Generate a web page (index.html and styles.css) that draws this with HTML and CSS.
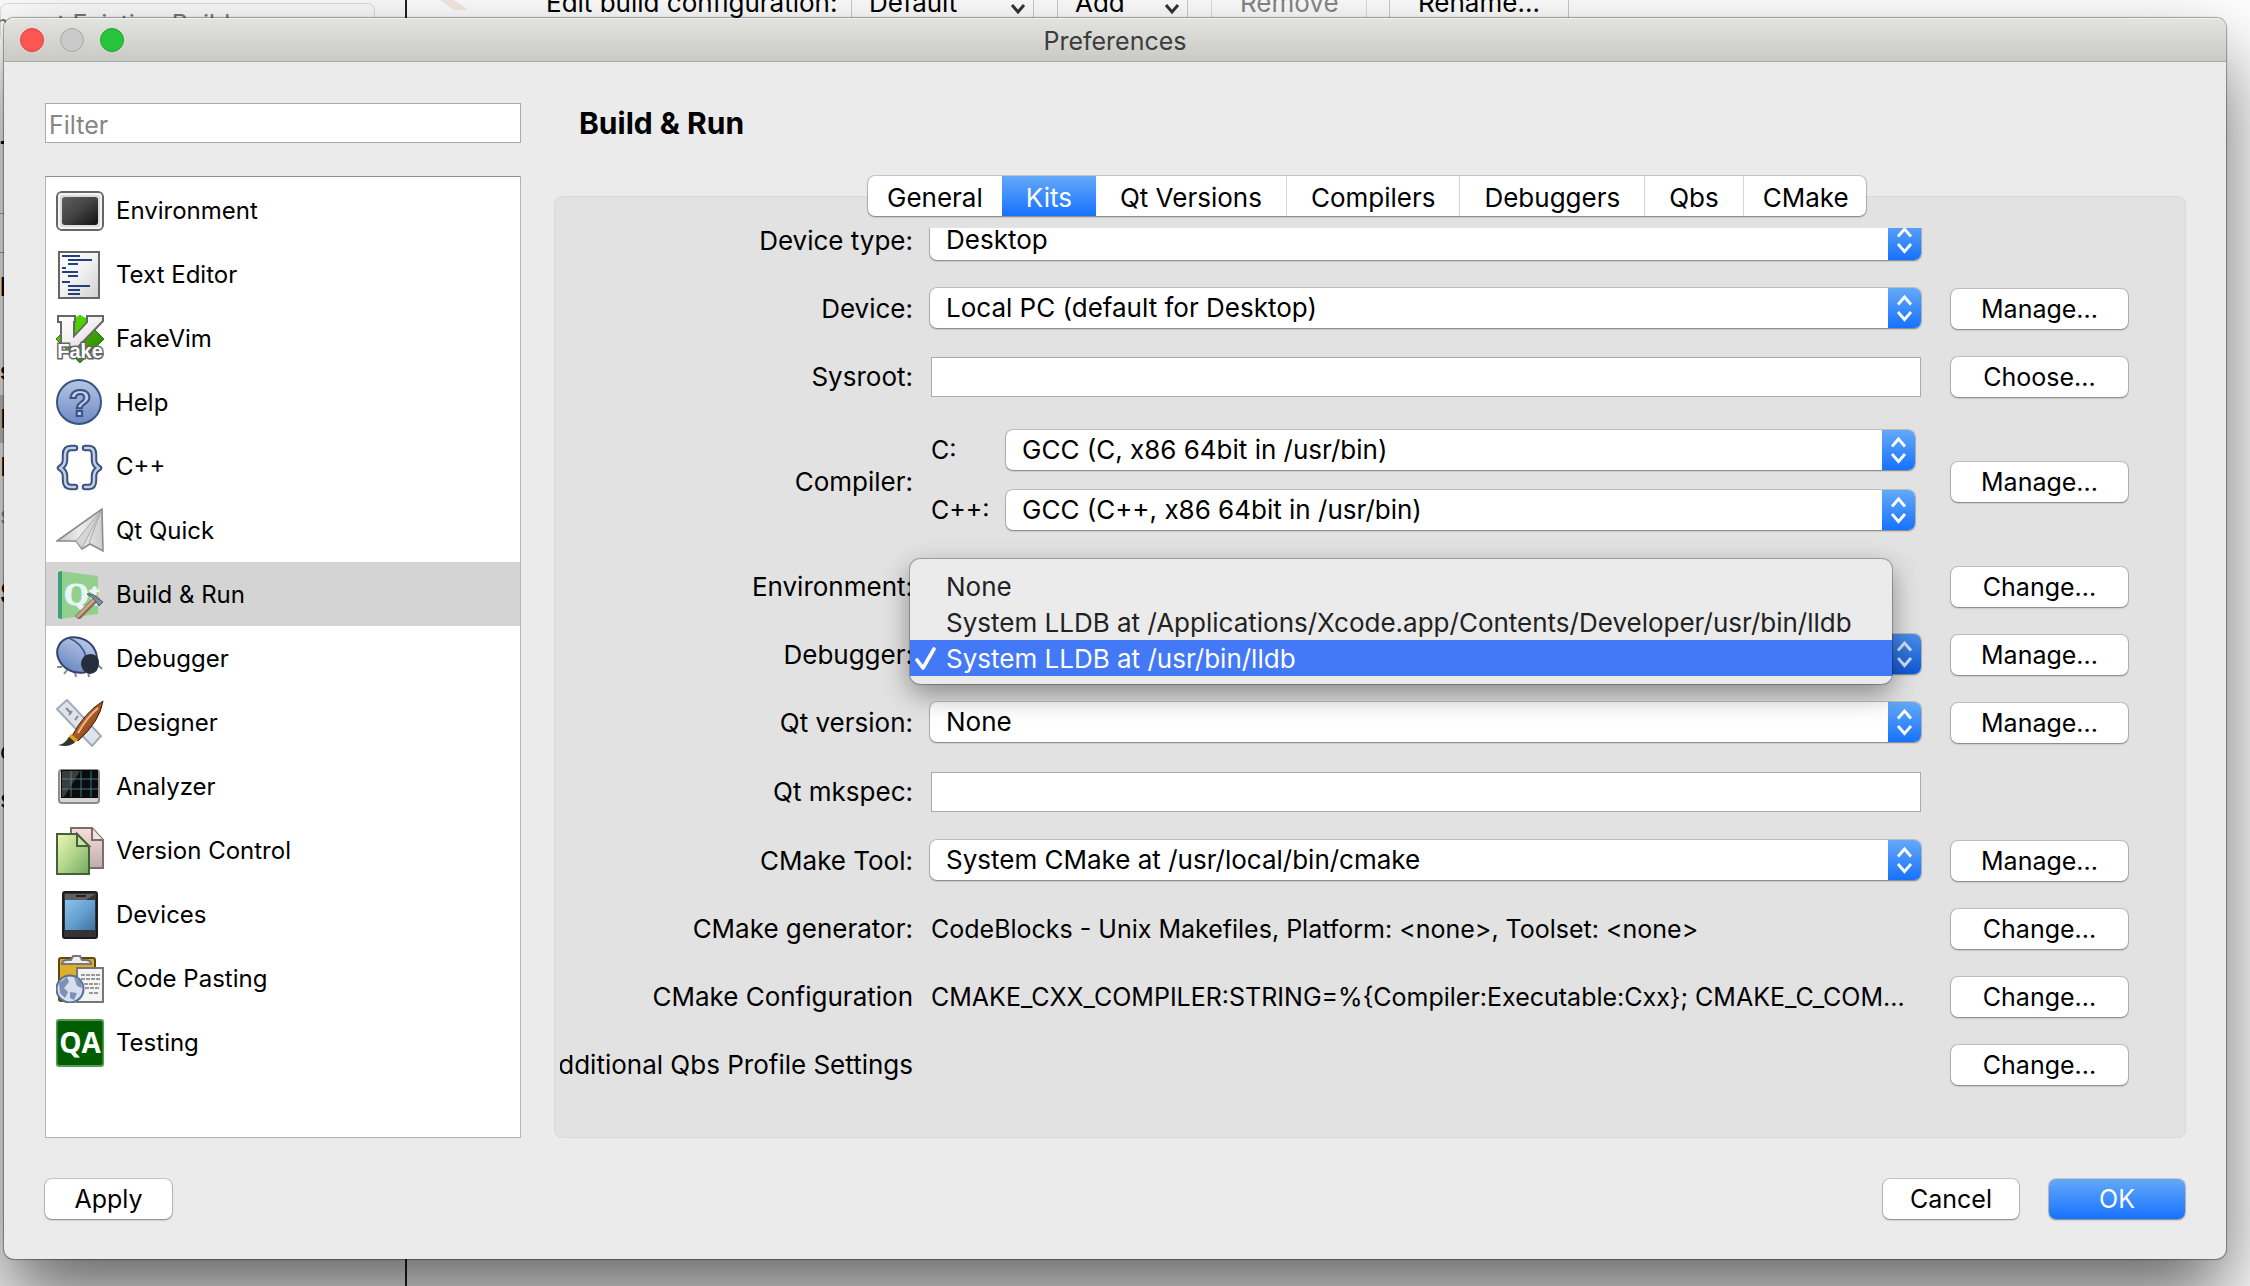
FILE: index.html
```html
<!DOCTYPE html>
<html lang="en">
<head>
<meta charset="utf-8">
<title>Preferences</title>
<link rel="stylesheet" href="styles.css">
</head>
<body>
<svg class="defs" aria-hidden="true">
  <defs>
    <linearGradient id="g-grey" x1="0" y1="0" x2="1" y2="1"><stop offset="0" stop-color="#fff"/><stop offset=".5" stop-color="#f1f1f1"/><stop offset="1" stop-color="#cfcfcf"/></linearGradient>
    <linearGradient id="g-dark" x1="0" y1="0" x2="1" y2="1"><stop offset="0" stop-color="#5e5e5e"/><stop offset=".45" stop-color="#454545"/><stop offset="1" stop-color="#111"/></linearGradient>
    <linearGradient id="g-blue" x1="0" y1="0" x2="0" y2="1"><stop offset="0" stop-color="#b6c6e6"/><stop offset="1" stop-color="#6d89c4"/></linearGradient>
    <linearGradient id="g-green" x1="0" y1="0" x2="1" y2="1"><stop offset="0" stop-color="#62e000"/><stop offset="1" stop-color="#1f7a00"/></linearGradient>
    <linearGradient id="g-leaf" x1="0" y1="0" x2="1" y2="1"><stop offset="0" stop-color="#eef6b5"/><stop offset=".5" stop-color="#b2d68c"/><stop offset="1" stop-color="#71a95f"/></linearGradient>
    <linearGradient id="g-pink" x1="0" y1="0" x2="0" y2="1"><stop offset="0" stop-color="#f9dddd"/><stop offset="1" stop-color="#bfaeae"/></linearGradient>
    <linearGradient id="g-screen" x1="0" y1="0" x2="1" y2="1"><stop offset="0" stop-color="#8cc3ee"/><stop offset=".5" stop-color="#66a0d0"/><stop offset="1" stop-color="#3f72a3"/></linearGradient>
    <linearGradient id="g-plane" x1="0" y1="0" x2="1" y2="0"><stop offset="0" stop-color="#c4c4c4"/><stop offset=".5" stop-color="#ececec"/><stop offset="1" stop-color="#cdcdcd"/></linearGradient>
    <linearGradient id="g-brush" x1="0" y1="0" x2="1" y2="1"><stop offset="0" stop-color="#e08a4a"/><stop offset="1" stop-color="#6b2c05"/></linearGradient>
    <symbol id="updown" viewBox="0 0 33 40"><path d="M10 16.500 16.500 9 23 16.500M10 24 16.500 31.500 23 24" fill="none" stroke="currentColor" stroke-width="2.800"/></symbol>
  </defs>
</svg>

<div class="backdrop" aria-hidden="true">
  <div class="back-side">
    <span class="back-tab">Import Existing Build...</span>
    <div class="back-list">
      <b>T</b><i></i><i></i><b class="is-heading">R</b><b>s</b><span class="is-current">E</span><span>P</span><span class="is-dim">s</span><b class="is-large">S</b><span class="is-late">c</span><span>s</span>
    </div>
  </div>
  <div class="back-main">
    <svg class="back-mark" viewBox="0 0 28 10"><path d="M0 0h14l14 10H14z" fill="#f6ebe3"/></svg>
    <span class="back-label">Edit build configuration:</span>
    <span class="back-box back-default">Default<svg viewBox="0 0 18 12"><path d="M3 2l6 7 6-7"/></svg></span>
    <span class="back-box back-add">Add<svg viewBox="0 0 18 12"><path d="M3 2l6 7 6-7"/></svg></span>
    <span class="back-box back-remove">Remove</span>
    <span class="back-box back-rename">Rename...</span>
  </div>
</div>

<main class="dialog">
  <header class="titlebar">
    <div class="lights">
      <button class="light light-close" aria-label="Close"></button>
      <button class="light light-min" aria-label="Minimize" disabled></button>
      <button class="light light-zoom" aria-label="Zoom"></button>
    </div>
    <span class="title">Preferences</span>
  </header>

  <div class="content">
    <div class="sidebar">
      <input class="text-field" type="text" placeholder="Filter" aria-label="Filter">
      <ul class="categories">
        <li><button class="category">
          <svg viewBox="0 0 48 48"><rect x="1" y="5" width="46" height="38" rx="5" fill="#dcdcdc" stroke="#666" stroke-width="2"/><rect x="3" y="7" width="42" height="34" rx="3" fill="none" stroke="#f3f3f3" stroke-width="2"/><rect x="6" y="10" width="36" height="28" rx="3" fill="url(#g-dark)"/></svg>
          Environment</button></li>
        <li><button class="category">
          <svg viewBox="0 0 48 48"><rect x="3" y="1" width="40" height="46" fill="url(#g-grey)" stroke="#666" stroke-width="2"/><path d="M6 5h18M12 9h24M12 13h10M6 17h4M6 21h16M12 25h10M6 31h8M12 35h22M12 39h12M12 43h12" stroke="#24407f" stroke-width="2"/></svg>
          Text Editor</button></li>
        <li><button class="category">
          <svg viewBox="0 0 48 48"><path d="M24 0 48 24 24 48 0 24z" fill="url(#g-green)" stroke="#2c7a10"/><path d="M2 1h17v6h-1v14L31 7V1h16v5L22 32h-8L5 30V7H2z" fill="url(#g-grey)" stroke="#666" stroke-width="2"/><path d="M20 2l4-2 6 3v4L19 19z" fill="#4fd000"/><text class="fake" x="24" y="43" text-anchor="middle">Fake</text></svg>
          FakeVim</button></li>
        <li><button class="category">
          <svg viewBox="0 0 48 48"><circle cx="23" cy="23" r="22" fill="url(#g-blue)" stroke="#3a5183" stroke-width="2"/><text class="mark" x="24" y="37" text-anchor="middle">?</text></svg>
          Help</button></li>
        <li><button class="category">
          <svg viewBox="0 0 48 48" fill="none" stroke-linecap="round" stroke-linejoin="round"><g stroke="#3a5280" stroke-width="6.500"><path d="M19 5h-4Q9 5 9 12v5Q9 22 4 25q5 3 5 8v4q0 7 6 7h4"/><path d="M29 5h4q5 0 5 7v5q0 5 5 8-5 3-5 8v4q0 7-5 7h-4"/></g><g stroke="#c3cfe2" stroke-width="2.500"><path d="M19 5h-4Q9 5 9 12v5Q9 22 4 25q5 3 5 8v4q0 7 6 7h4"/><path d="M29 5h4q5 0 5 7v5q0 5 5 8-5 3-5 8v4q0 7-5 7h-4"/></g></svg>
          C++</button></li>
        <li><button class="category">
          <svg viewBox="0 0 48 48"><path d="M1 34 46 2l1 42-13-7-8 5-6-8z" fill="url(#g-plane)" stroke="#8c8c8c" stroke-width="1.600"/><path d="M45 4 20 34l6 7zM45 4 33 36" fill="#d6d6d6" stroke="#aaa"/></svg>
          Qt Quick</button></li>
        <li><button class="category is-selected" aria-current="true">
          <svg viewBox="0 0 48 48"><path d="M3 0 42 5v38L3 48z" fill="#93d08e"/><path d="M2 1 6 0v48l-4-1z" fill="#3d9f79"/><text class="qt" x="8" y="34">Qt</text><path d="M21 47 42 26" stroke="#8a6a58" stroke-width="6"/><path d="M21 46 41 26" stroke="#d0a58b" stroke-width="3"/><path d="M31 23q6-1 9 3l7 5-4 4-6-8z" fill="#7d8d9c" stroke="#4e5c68"/></svg>
          Build &amp; Run</button></li>
        <li><button class="category">
          <svg viewBox="0 0 48 48"><path d="M1 32l5 0M8 39l3-4M20 42l-1-5M46 34l-5-5M33 42l-1-6" stroke="#888" stroke-width="2"/><ellipse cx="21" cy="20" rx="20.500" ry="17" transform="rotate(28 21 20)" fill="url(#g-blue)" stroke="#2f436d" stroke-width="2"/><path d="M13 3Q27 9 30 22" fill="none" stroke="#41588c" stroke-width="1.600"/><path d="M25 30q0-10 9-11 8 0 9 8 0 11-9 12-7-1-9-9z" fill="#262e3d"/></svg>
          Debugger</button></li>
        <li><button class="category">
          <svg viewBox="0 0 48 48"><path d="M1 10 11 1l34 36-9 10z" fill="#dfe3ec" stroke="#a3abbd" stroke-width="2"/><path d="M10 9l5 5M16 12l-3 4M22 17l-3 4" stroke="#7e8698" stroke-width="2"/><path d="M47 2Q44 22 22 42l-6-5Q28 14 47 2z" fill="url(#g-brush)" stroke="#3d1a05"/><path d="M42 9Q31 18 22 34" fill="none" stroke="#f0b68a" stroke-width="2"/><path d="M15 35l7 6-5 4-6-5z" fill="#dba520"/><path d="M13 38l6 5Q13 49 2 46q7-1 11-8z" fill="#333"/></svg>
          Designer</button></li>
        <li><button class="category">
          <svg viewBox="0 0 48 48"><rect x="3" y="7" width="40" height="33" rx="3" fill="#d5d5d5" stroke="#8b8b8b" stroke-width="2"/><rect x="5" y="7" width="37" height="28" fill="#0c0c0c"/><path d="M6 8h18L8 34H6z" fill="#3c3c3c"/><path d="M15 8v26M25 8v26M35 8v26M6 16h36M6 26h36" stroke="#4e93a3" stroke-width="1" opacity=".8"/></svg>
          Analyzer</button></li>
        <li><button class="category">
          <svg viewBox="0 0 48 48"><path d="M15 1h21l11 12v28H15z" fill="url(#g-pink)" stroke="#7d6e6e" stroke-width="2"/><path d="M36 1v12h11" fill="#efe4e4" stroke="#7d6e6e" stroke-width="2"/><path d="M1 7h20l12 13v27H1z" fill="url(#g-leaf)" stroke="#466039" stroke-width="2"/><path d="M21 7v12h12z" fill="#c6e3a0" stroke="#466039" stroke-width="2"/></svg>
          Version Control</button></li>
        <li><button class="category">
          <svg viewBox="0 0 48 48"><rect x="7" y="1" width="34" height="46" rx="2" fill="#333" stroke="#1b1b1b" stroke-width="2"/><path d="M9 3h30L30 9H9z" fill="#5e5e5e"/><path d="M20 5h10" stroke="#111" stroke-width="1.500"/><rect x="9" y="9" width="30" height="30" fill="url(#g-screen)"/></svg>
          Devices</button></li>
        <li><button class="category">
          <svg viewBox="0 0 48 48"><rect x="3" y="3" width="36" height="43" rx="2" fill="#dcb127" stroke="#5c4a12" stroke-width="2"/><path d="M6 9q0-4 6-4h3l2-4h7l2 4h3q6 0 6 4z" fill="#eee" stroke="#777" stroke-width="2"/><rect x="21" y="13" width="26" height="34" fill="#f4f4f4" stroke="#777" stroke-width="2"/><path d="M25 20h19M25 24h19M28 29h16M29 33h14M33 38h10" stroke="#999" stroke-width="2" stroke-dasharray="4 1"/><circle cx="14" cy="34" r="13.500" fill="#d8dfec" stroke="#5a6d94" stroke-width="2"/><path d="M3 28l8-6 2 5-5 6 4 4-3 6-5-5zM18 22l7 5 1 6-5-2zM14 37l7 1-3 7-4-2z" fill="#7d91b8"/></svg>
          Code Pasting</button></li>
        <li><button class="category">
          <svg viewBox="0 0 48 48"><rect x="0" y="0" width="48" height="48" rx="3" fill="#5a9a58"/><rect x="1.500" y="2" width="45" height="44" rx="2" fill="#005e00"/><text class="qa" x="24" y="34" text-anchor="middle">QA</text></svg>
          Testing</button></li>
      </ul>
    </div>

    <section class="page">
      <h1 class="heading">Build &amp; Run</h1>
      <div class="tabbed">
        <div class="tabs" role="tablist">
          <button class="tab" role="tab">General</button>
          <button class="tab is-active" role="tab" aria-selected="true">Kits</button>
          <button class="tab" role="tab">Qt Versions</button>
          <button class="tab" role="tab">Compilers</button>
          <button class="tab" role="tab">Debuggers</button>
          <button class="tab" role="tab">Qbs</button>
          <button class="tab" role="tab">CMake</button>
        </div>
        <div class="panel">
          <form class="kit">
            <div class="row">
              <label for="device-type">Device type:</label>
              <div class="combo"><select id="device-type"><option>Desktop</option></select><svg class="arrows"><use href="#updown"/></svg></div>
            </div>
            <div class="row">
              <label for="device">Device:</label>
              <div class="combo"><select id="device"><option>Local PC (default for Desktop)</option></select><svg class="arrows"><use href="#updown"/></svg></div>
              <button type="button" class="button">Manage...</button>
            </div>
            <div class="row">
              <label for="sysroot">Sysroot:</label>
              <input class="text-field" type="text" id="sysroot">
              <button type="button" class="button">Choose...</button>
            </div>
            <div class="row row-compiler">
              <span class="label">Compiler:</span>
              <div class="compilers">
                <label for="cc">C:</label>
                <div class="combo"><select id="cc"><option>GCC (C, x86 64bit in /usr/bin)</option></select><svg class="arrows"><use href="#updown"/></svg></div>
                <label for="cxx">C++:</label>
                <div class="combo"><select id="cxx"><option>GCC (C++, x86 64bit in /usr/bin)</option></select><svg class="arrows"><use href="#updown"/></svg></div>
              </div>
              <button type="button" class="button">Manage...</button>
            </div>
            <div class="row">
              <span class="label">Environment:</span>
              <span></span>
              <button type="button" class="button">Change...</button>
            </div>
            <div class="row">
              <span class="label">Debugger:</span>
              <div class="combo is-open">
                <button type="button" class="combo-button" aria-label="Debugger" aria-haspopup="listbox" aria-expanded="true"></button>
                <svg class="arrows"><use href="#updown"/></svg>
                <ul class="menu" role="listbox" aria-label="Debugger">
                  <li role="option">None</li>
                  <li role="option">System LLDB at /Applications/Xcode.app/Contents/Developer/usr/bin/lldb</li>
                  <li role="option" aria-selected="true" class="is-checked"><svg viewBox="0 0 22 24"><path d="M2 13l6 8L19 2" fill="none" stroke="#fff" stroke-width="3.600" stroke-linecap="round" stroke-linejoin="round"/></svg>System LLDB at /usr/bin/lldb</li>
                </ul>
              </div>
              <button type="button" class="button">Manage...</button>
            </div>
            <div class="row">
              <label for="qt-version">Qt version:</label>
              <div class="combo"><select id="qt-version"><option>None</option></select><svg class="arrows"><use href="#updown"/></svg></div>
              <button type="button" class="button">Manage...</button>
            </div>
            <div class="row row-mkspec">
              <label for="mkspec">Qt mkspec:</label>
              <input class="text-field" type="text" id="mkspec">
            </div>
            <div class="row">
              <label for="cmake-tool">CMake Tool:</label>
              <div class="combo"><select id="cmake-tool"><option>System CMake at /usr/local/bin/cmake</option></select><svg class="arrows"><use href="#updown"/></svg></div>
              <button type="button" class="button">Manage...</button>
            </div>
            <div class="row">
              <span class="label">CMake generator:</span>
              <span class="value">CodeBlocks - Unix Makefiles, Platform: &lt;none&gt;, Toolset: &lt;none&gt;</span>
              <button type="button" class="button">Change...</button>
            </div>
            <div class="row">
              <span class="label">CMake Configuration</span>
              <span class="value">CMAKE_CXX_COMPILER:STRING=%{Compiler:Executable:Cxx}; CMAKE_C_COM...</span>
              <button type="button" class="button">Change...</button>
            </div>
            <div class="row">
              <span class="label">Additional Qbs Profile Settings</span>
              <span></span>
              <button type="button" class="button">Change...</button>
            </div>
          </form>
        </div>
      </div>
    </section>
  </div>

  <footer class="actions">
    <button class="button action-apply">Apply</button>
    <button class="button">Cancel</button>
    <button class="button is-primary">OK</button>
  </footer>
</main>
</body>
</html>
```

FILE: styles.css
```css
* { box-sizing: border-box; }

body {
  margin: 0;
  min-height: 100vh;
  position: relative;
  overflow: hidden;
  background: #fff;
  color: #000;
  font: 25px/32px Inter, "Liberation Sans", sans-serif;
}

button, input, select { font: inherit; color: inherit; margin: 0; }
ul { list-style: none; margin: 0; padding: 0; }
.defs { position: absolute; width: 0; height: 0; }

/* Window behind the dialog */
.backdrop {
  position: absolute;
  inset: 0;
  display: flex;
  overflow: hidden;
  white-space: nowrap;
}
.back-side { width: 407px; border-right: 2px solid #222; background: #fcfcfc; overflow: hidden; }
.back-tab {
  display: flex;
  justify-content: flex-end;
  width: 375px;
  height: 40px;
  margin-top: 3px;
  padding: 4px 122px 0 0;
  border: 1px solid #ddd;
  border-radius: 8px;
  color: #777;
}
.back-list { display: flex; flex-direction: column; width: 40px; padding-top: 84px; }
.back-list > * { line-height: 48px; }
.back-list i { height: 39px; border-bottom: 1px solid #aaa; }
.back-list .is-heading { margin: 10px 0 36px; }
.back-list .is-current { background: #ccc; }
.back-list .is-dim { color: #999; }
.back-list .is-large { margin-top: 30px; font-size: 30px; }
.back-list .is-late { margin-top: 110px; }
.back-main { display: flex; flex: 1; height: 20px; font-size: 26px; }
.back-mark { width: 28px; height: 10px; margin-left: 33px; }
.back-label { width: 305px; margin-left: 78px; margin-top: -13px; }
.back-box {
  display: flex;
  justify-content: space-between;
  height: 40px;
  margin-top: -18px;
  padding: 4px 6px 0 17px;
  border: 1px solid #ccc;
  border-radius: 5px;
}
.back-box svg { width: 18px; height: 12px; margin-top: 16px; fill: none; stroke: #333; stroke-width: 3; }
.back-default { width: 183px; }
.back-add { width: 131px; margin-left: 23px; }
.back-remove { width: 156px; margin-left: 23px; padding-left: 28px; color: #888; border-color: #ddd; }
.back-rename { width: 180px; margin-left: 22px; padding-left: 28px; }

/* Dialog */
.dialog {
  position: relative;
  margin: 18px 24px 28px 4px;
  border-radius: 10px;
  background: #ebebeb;
  box-shadow: 0 0 1px 1px rgba(0, 0, 0, .35), 0 40px 80px rgba(0, 0, 0, .6);
}
.titlebar {
  display: grid;
  grid-template-columns: 1fr auto 1fr;
  align-items: center;
  height: 44px;
  border-bottom: 1px solid #a9a9a7;
  border-radius: 10px 10px 0 0;
  background: linear-gradient(#e3e4df, #c9c9c6);
  box-shadow: inset 0 1px #f2f2f0;
}
.lights { display: flex; gap: 16px; padding-left: 16px; }
.light { width: 24px; height: 24px; padding: 0; border: 1px solid; border-radius: 50%; }
.light-close { background: #fc5650; border-color: #e0443e; }
.light-min { background: #c9c9c9; border-color: #a9a9a9; }
.light-zoom { background: #28c43c; border-color: #1ea42e; }
.title { padding-top: 2px; color: #3c3c3c; }

.content {
  display: grid;
  grid-template-columns: 476px minmax(0, 1fr);
  gap: 33px;
  padding: 41px 40px 0 41px;
}
.sidebar, .page { display: flex; flex-direction: column; gap: 33px; }

.text-field {
  width: 100%;
  height: 40px;
  padding: 3px 3px 0;
  border: 1px solid #aaa;
  border-radius: 0;
  background: #fff;
  outline: 0;
}
.text-field::placeholder { color: #868686; opacity: 1; }

.categories { flex: 1; padding-top: 1px; border: 1px solid #b4b4b4; border-top-color: #8e8e8e; background: #fff; }
.category {
  display: flex;
  align-items: center;
  gap: 12px;
  width: 100%;
  height: 64px;
  padding: 1px 10px 0;
  border: 0;
  background: none;
  font-size: 24px;
  text-align: left;
}
.category svg { width: 48px; height: 48px; flex: none; }
.category.is-selected { background: #d4d4d4; }
.fake { font: bold 20px "Liberation Sans", sans-serif; fill: #fff; stroke: #666; stroke-width: 3px; paint-order: stroke; }
.mark { font: bold 37px "Liberation Sans", sans-serif; fill: #c5d1e8; stroke: #3a5183; stroke-width: 2px; }
.qt { font: bold 32px "Liberation Serif", serif; fill: #e6f5f5; stroke: #e6f5f5; stroke-width: 1px; }
.qa { font: bold 28px "Open Sans", sans-serif; fill: #fff; }

.heading { margin: 0; padding-left: 25px; font-size: 30px; line-height: 40px; font-weight: 700; }
.tabbed { display: flex; flex-direction: column; align-items: center; }
.tabs {
  display: flex;
  width: 998px;
  height: 40px;
  margin: 0 6px -20px 0;
  z-index: 1;
  border-radius: 7px;
  background: #fff;
  box-shadow: 0 0 0 1px rgba(0, 0, 0, .15), 0 1px 2px rgba(0, 0, 0, .35);
}
.tab {
  flex: 1 1 auto;
  padding: 3px 24px 0;
  border: 0;
  border-right: 1px solid #d5d5d5;
  background: none;
  font-size: 26px;
  white-space: nowrap;
}
.tab:first-child, .tab:last-child { padding-left: 19px; padding-right: 19px; border-right: 0; }
.tab.is-active { border: 0; background: linear-gradient(#64a9f8, #1672ff); color: #fff; }

.panel {
  width: 100%;
  padding: 31px 56px 38px 5px;
  border: 1px solid #d9d9d9;
  border-radius: 8px;
  background: #e2e2e2;
}
.kit { overflow: hidden; padding-right: 1px; }
.row {
  display: grid;
  grid-template-columns: 353px minmax(0, 1fr) 189px;
  column-gap: 18px;
  align-items: center;
  height: 68px;
}
.row > .button { margin-left: 12px; }
.row:first-child { margin-top: -21px; }
.row-compiler { height: 142px; }
.row-mkspec { height: 70px; }
.row > label, .row > .label { display: flex; justify-content: flex-end; font-size: 26px; white-space: nowrap; }
.value { white-space: nowrap; }
.compilers {
  display: grid;
  grid-template-columns: 75px minmax(0, 1fr);
  row-gap: 20px;
  align-items: center;
  margin-bottom: 4px;
  padding-right: 6px;
}

.combo {
  position: relative;
  height: 40px;
  border-radius: 7px;
  background: #fff;
  font-size: 26px;
  box-shadow: 0 0 0 1px rgba(0, 0, 0, .15), 0 1px 2px rgba(0, 0, 0, .35);
}
.row > .combo { margin: 0 0 2px -1px; }
.combo select {
  display: block;
  width: 100%;
  height: 40px;
  padding: 0 40px 0 16px;
  border: 0;
  background: none;
  appearance: none;
}
.combo-button { width: 100%; height: 40px; border: 0; background: none; }
.arrows {
  position: absolute;
  top: 0;
  right: 0;
  width: 33px;
  height: 40px;
  border-radius: 0 7px 7px 0;
  background: linear-gradient(#64a9f8, #1672ff);
  color: #fff;
  pointer-events: none;
}
.is-open .arrows { background: linear-gradient(#4a8eea, #0f58d8); color: #d5e2f8; }

.menu {
  position: absolute;
  z-index: 2;
  top: -75px;
  left: -20px;
  right: 29px;
  padding: 9px 0 8px;
  border-radius: 10px;
  background: #ebebeb;
  color: #222;
  box-shadow: 0 0 0 1px rgba(0, 0, 0, .25), 0 10px 28px rgba(0, 0, 0, .4);
}
.menu li { display: flex; align-items: center; height: 36px; padding: 2px 0 0 36px; white-space: nowrap; }
.menu li.is-checked { padding-left: 5px; background: #4378f6; color: #fff; }
.menu svg { width: 22px; height: 24px; margin-right: 9px; }

.button {
  height: 40px;
  padding: 0;
  border: 0;
  border-radius: 7px;
  background: #fff;
  box-shadow: 0 0 0 1px rgba(0, 0, 0, .15), 0 1px 2px rgba(0, 0, 0, .35);
}
.actions { display: flex; gap: 30px; padding: 41px 41px 40px; }
.actions .button { width: 136px; }
.actions .action-apply { width: 127px; margin-right: auto; }
.button.is-primary { background: linear-gradient(#64a9f8, #1672ff); color: #fff; }
```
